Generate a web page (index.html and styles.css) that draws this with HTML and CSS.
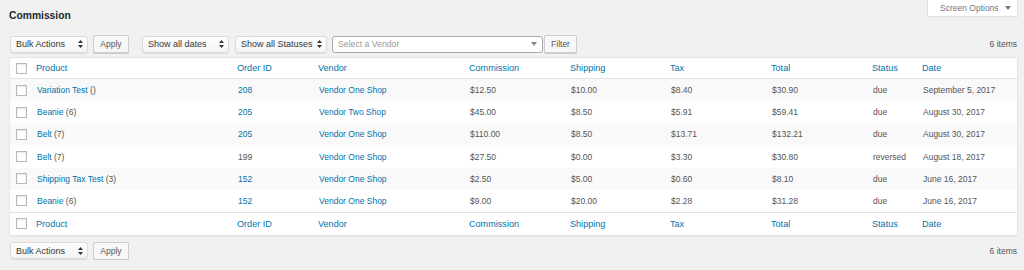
FILE: index.html
```html
<!DOCTYPE html>
<html lang="en">
<head>
<meta charset="utf-8">
<title>Commission</title>
<link rel="stylesheet" href="styles.css">
</head>
<body>
<div class="wrap">
  <div class="top">
    <h1 class="title">Commission</h1>
    <button class="screen-opts" type="button">Screen Options <svg class="caret" width="6" height="4" viewBox="0 0 6 4"><path d="M0 0H6L3 4Z"/></svg></button>
  </div>

  <div class="tablenav">
    <div class="select w-bulk">Bulk Actions <svg class="updown" width="5" height="8" viewBox="0 0 5 8"><path d="M2.5 0L5 3H0Z M0 5H5L2.5 8Z"/></svg></div>
    <button class="btn w-apply" type="button">Apply</button>
    <div class="select w-dates gap-l">Show all dates <svg class="updown" width="5" height="8" viewBox="0 0 5 8"><path d="M2.5 0L5 3H0Z M0 5H5L2.5 8Z"/></svg></div>
    <div class="select w-status gap-s">Show all Statuses <svg class="updown" width="5" height="8" viewBox="0 0 5 8"><path d="M2.5 0L5 3H0Z M0 5H5L2.5 8Z"/></svg></div>
    <div class="vendor">Select a Vendor <svg class="down" width="6" height="4" viewBox="0 0 6 4"><path d="M0 0H6L3 4Z"/></svg></div>
    <button class="btn w-filter" type="button">Filter</button>
    <span class="count">6 items</span>
  </div>

  <table class="list">
    <colgroup>
      <col class="c-cb"><col class="c-product"><col class="c-order"><col class="c-vendor"><col class="c-comm"><col class="c-ship"><col class="c-tax"><col class="c-total"><col class="c-status"><col class="c-date">
    </colgroup>
    <thead>
      <tr>
        <th class="cbcell"><span class="cb"></span></th>
        <th><a>Product</a></th>
        <th><a>Order ID</a></th>
        <th><a>Vendor</a></th>
        <th><a>Commission</a></th>
        <th><a>Shipping</a></th>
        <th><a>Tax</a></th>
        <th><a>Total</a></th>
        <th><a>Status</a></th>
        <th><a>Date</a></th>
      </tr>
    </thead>
    <tbody>
      <tr>
        <td class="cbcell"><span class="cb"></span></td>
        <td><a>Variation Test</a> ()</td>
        <td><a>208</a></td>
        <td><a>Vendor One Shop</a></td>
        <td>$12.50</td><td>$10.00</td><td>$8.40</td><td>$30.90</td><td>due</td><td>September 5, 2017</td>
      </tr>
      <tr>
        <td class="cbcell"><span class="cb"></span></td>
        <td><a>Beanie</a> (6)</td>
        <td><a>205</a></td>
        <td><a>Vendor Two Shop</a></td>
        <td>$45.00</td><td>$8.50</td><td>$5.91</td><td>$59.41</td><td>due</td><td>August 30, 2017</td>
      </tr>
      <tr>
        <td class="cbcell"><span class="cb"></span></td>
        <td><a>Belt</a> (7)</td>
        <td><a>205</a></td>
        <td><a>Vendor One Shop</a></td>
        <td>$110.00</td><td>$8.50</td><td>$13.71</td><td>$132.21</td><td>due</td><td>August 30, 2017</td>
      </tr>
      <tr>
        <td class="cbcell"><span class="cb"></span></td>
        <td><a>Belt</a> (7)</td>
        <td>199</td>
        <td><a>Vendor One Shop</a></td>
        <td>$27.50</td><td>$0.00</td><td>$3.30</td><td>$30.80</td><td>reversed</td><td>August 18, 2017</td>
      </tr>
      <tr>
        <td class="cbcell"><span class="cb"></span></td>
        <td><a>Shipping Tax Test</a> (3)</td>
        <td><a>152</a></td>
        <td><a>Vendor One Shop</a></td>
        <td>$2.50</td><td>$5.00</td><td>$0.60</td><td>$8.10</td><td>due</td><td>June 16, 2017</td>
      </tr>
      <tr>
        <td class="cbcell"><span class="cb"></span></td>
        <td><a>Beanie</a> (6)</td>
        <td><a>152</a></td>
        <td><a>Vendor One Shop</a></td>
        <td>$9.00</td><td>$20.00</td><td>$2.28</td><td>$31.28</td><td>due</td><td>June 16, 2017</td>
      </tr>
    </tbody>
    <tfoot>
      <tr>
        <th class="cbcell"><span class="cb"></span></th>
        <th><a>Product</a></th>
        <th><a>Order ID</a></th>
        <th><a>Vendor</a></th>
        <th><a>Commission</a></th>
        <th><a>Shipping</a></th>
        <th><a>Tax</a></th>
        <th><a>Total</a></th>
        <th><a>Status</a></th>
        <th><a>Date</a></th>
      </tr>
    </tfoot>
  </table>

  <div class="tablenav bottom">
    <div class="select w-bulk">Bulk Actions <svg class="updown" width="5" height="8" viewBox="0 0 5 8"><path d="M2.5 0L5 3H0Z M0 5H5L2.5 8Z"/></svg></div>
    <button class="btn w-apply" type="button">Apply</button>
    <span class="count">6 items</span>
  </div>
</div>
</body>
</html>
```

FILE: styles.css
```css
html, body {
  margin: 0;
  background: #f1f1f1;
}

body {
  font-family: "Liberation Sans", Arial, sans-serif;
  font-size: 8.5px;
  color: #555;
}

.wrap {
  padding: 0 6px 0 9px;
}

.top {
  display: flex;
  justify-content: space-between;
  align-items: flex-start;
  height: 22px;
}

.title {
  margin: 10px 0 0 0;
  font-size: 10.3px;
  line-height: 12px;
  font-weight: bold;
  color: #23282d;
}

.screen-opts {
  display: flex;
  align-items: center;
  gap: 6px;
  width: 91px;
  height: 17px;
  padding: 0 0 0 12px;
  margin: 0;
  box-sizing: border-box;
  background: #fff;
  border: 1px solid #e2e2e2;
  border-top: 0;
  box-shadow: 0 1px 1px -1px rgba(0, 0, 0, 0.1);
  font: inherit;
  font-size: 8.5px;
  color: #72777c;
}

.caret {
  fill: #72777c;
}

.tablenav {
  display: flex;
  align-items: center;
  height: 18px;
  margin-top: 13px;
}

.tablenav.bottom {
  margin-top: 6px;
}

.select {
  display: flex;
  align-items: center;
  justify-content: space-between;
  box-sizing: border-box;
  height: 17px;
  padding: 0 4px 0 5px;
  background: linear-gradient(#fdfdfd, #f4f4f4);
  border: 1px solid #dadada;
  border-radius: 3px;
  box-shadow: 0 1px 1px rgba(0, 0, 0, 0.08);
  font-size: 9px;
  color: #32373c;
  white-space: nowrap;
}

.updown {
  fill: #333;
  flex: none;
}

.w-bulk { width: 78px; margin-left: 1px; }
.w-dates { width: 87px; }
.w-status { width: 92px; padding-left: 5px; }
.gap-l { margin-left: 13px; }
.gap-s { margin-left: 6px; }

.btn {
  box-sizing: border-box;
  height: 18px;
  margin: 0 0 0 5px;
  padding: 0;
  background: #f7f7f7;
  border: 1px solid #cccccc;
  border-radius: 2px;
  box-shadow: 0 1px 0 #cccccc;
  font-family: inherit;
  font-size: 8.5px;
  color: #555;
}

.w-apply { width: 36px; }
.w-filter { width: 33px; margin-left: 1px; }

.vendor {
  display: flex;
  align-items: center;
  justify-content: space-between;
  box-sizing: border-box;
  width: 211px;
  height: 17px;
  margin-left: 5px;
  padding: 0 5px 0 5px;
  background: #fff;
  border: 1px solid #aaa;
  border-radius: 3px;
  font-size: 8.7px;
  color: #999;
}

.down {
  fill: #888;
}

.count {
  margin-left: auto;
  padding-right: 1px;
  font-size: 8.5px;
  color: #555;
}

.list {
  width: 100%;
  margin-top: 4px;
  table-layout: fixed;
  border-collapse: separate;
  border-spacing: 0;
  background: #fff;
  border: 1px solid #e5e5e5;
  box-shadow: 0 1px 1px rgba(0, 0, 0, 0.04);
}

.c-cb { width: 20px; }
.c-product { width: 201px; }
.c-order { width: 81px; }
.c-vendor { width: 151px; }
.c-comm { width: 101px; }
.c-ship { width: 100px; }
.c-tax { width: 101px; }
.c-total { width: 101px; }
.c-status { width: 50px; }
.c-date { width: 101px; }

.list th,
.list td {
  padding: 0 0 0 7px;
  text-align: left;
  vertical-align: middle;
  white-space: nowrap;
  overflow: hidden;
}

.list th {
  font-weight: normal;
  font-size: 9.1px;
  padding-left: 6px;
}

.list thead th {
  height: 20px;
  border-bottom: 1px solid #e1e1e1;
}

.list tfoot th {
  height: 22px;
  border-top: 1px solid #e1e1e1;
}

.list td {
  height: 22.17px;
  font-size: 8.5px;
  color: #555;
}

.list tbody tr:nth-child(odd) td {
  background: #f9f9f9;
}

.list a {
  color: #0073aa;
  text-decoration: none;
}

.list .cbcell {
  padding-left: 6px;
}

.cb {
  display: block;
  width: 11px;
  height: 11px;
  box-sizing: border-box;
  border: 1px solid #b4b9be;
  background: #fff;
  box-shadow: inset 0 1px 2px rgba(0, 0, 0, 0.1);
}
```
